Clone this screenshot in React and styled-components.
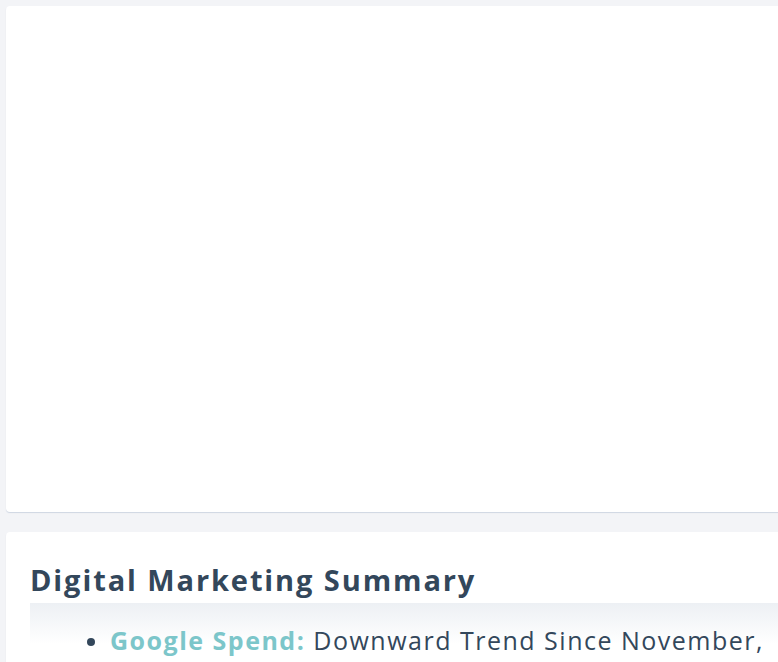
import React from 'react';
import styled, { createGlobalStyle } from 'styled-components';

const Global = createGlobalStyle`
body{
    margin:0;
    background:#f3f4f7;
    font-family:"Open Sans","Liberation Sans",sans-serif;
    overflow:hidden;
}
`

const Page = styled.div`
width:900px;
padding:6px 0 0 6px;
display:flex;
flex-direction:column;
gap:20px;
`

const Card = styled.div`
background:#fff;
border-radius:4px;
height:${props => props.h}px;
box-shadow:0 1px 1px #cfd6e2;
box-sizing:border-box;
padding:${props => props.pad || '0'};
`

const Title = styled.h2`
margin:0;
font-size:29px;
font-weight:700;
color:#33475b;
letter-spacing:1.9px;
line-height:40px;
`

const Fade = styled.div`
margin-top:3px;
background:linear-gradient(#edf0f4, #fff 45%);
padding:19px 0 0 0;
`

const List = styled.ul`
margin:0;
padding:0 0 0 80px;
width:700px;
list-style:disc;
color:#33475b;
font-size:25px;
line-height:36px;
letter-spacing:1.5px;
li::marker{font-size:22px;}
`

const Label = styled.span`
color:#7cc6ca;
font-weight:700;
`

export default function App() {
    return (
        <>
            <Global />
            <Page>
                <Card h={506} />
                <Card h={200} pad="28px 0 0 24px">
                    <Title>Digital Marketing Summary</Title>
                    <Fade>
                        <List>
                            <li><Label>Google Spend:</Label> Downward Trend Since November, 2023</li>
                        </List>
                    </Fade>
                </Card>
            </Page>
        </>
    )
}
